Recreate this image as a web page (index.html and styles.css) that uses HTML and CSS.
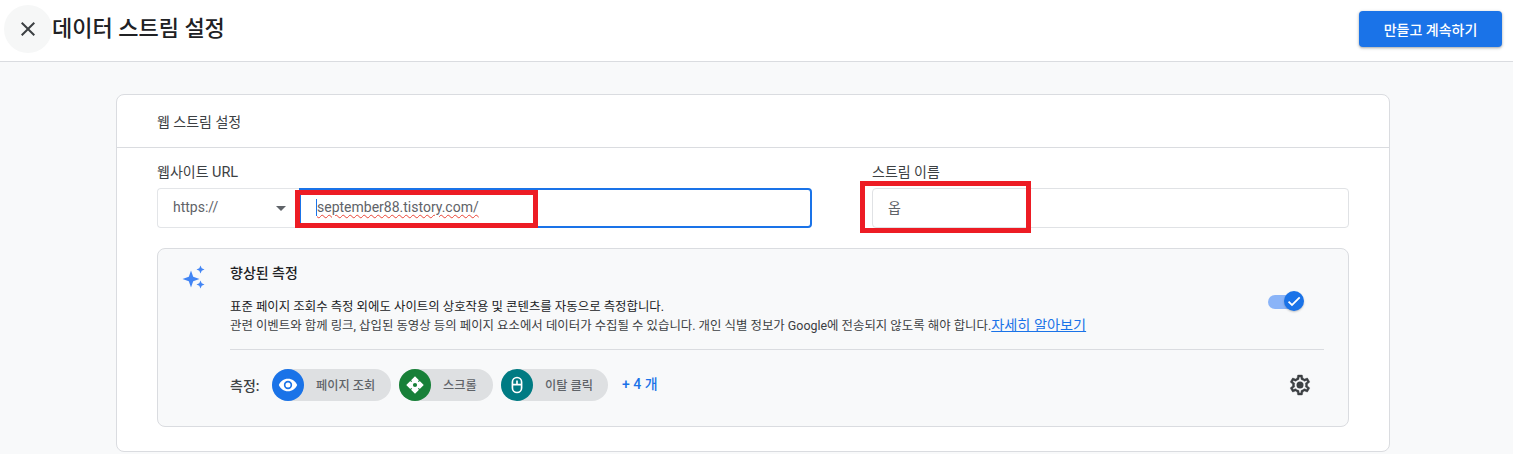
FILE: index.html
```html
<!DOCTYPE html>
<html lang="ko">
<head>
    <meta charset="UTF-8">
    <meta name="viewport" content="width=device-width, initial-scale=1.0">
    <title>데이터 스트림 설정</title>
    <link rel="stylesheet" href="styles.css">
</head>
<body>
    <header class="topbar">
        <div class="close-btn">
            <svg width="24" height="24" viewBox="0 0 24 24"><path d="M19 6.41 17.59 5 12 10.59 6.41 5 5 6.41 10.59 12 5 17.59 6.41 19 12 13.41 17.59 19 19 17.59 13.41 12z" fill="#3c4043"/></svg>
        </div>
        <h1 class="page-title">데이터 스트림 설정</h1>
        <button class="primary-btn">만들고 계속하기</button>
    </header>

    <main class="content">
        <section class="card">
            <div class="card-title">웹 스트림 설정</div>
            <div class="card-body">
                <div class="fields">
                    <div class="field-url">
                        <div class="field-label">웹사이트 <span class="label-latin">URL</span></div>
                        <div class="url-row">
                            <div class="protocol">
                                <span>https://</span>
                                <span class="arrow"></span>
                            </div>
                            <div class="url-input">
                                <span class="caret"></span><span class="url-text">september88.tistory.com/</span>
                                <div class="red-box box-url"></div>
                            </div>
                        </div>
                    </div>
                    <div class="field-name">
                        <div class="field-label">스트림 이름</div>
                        <div class="name-input">
                            옵
                            <div class="red-box box-name"></div>
                        </div>
                    </div>
                </div>

                <div class="panel">
                    <div class="panel-top">
                        <svg class="sparkle" width="24" height="24" viewBox="0 0 24 24" fill="#4285f4">
                            <path d="M9 5.5 11.2 11.8 17.5 14 11.2 16.2 9 22.5 6.8 16.2 0.5 14 6.8 11.8z"/>
                            <path d="M18.5 0.5 19.7 3.3 22.5 4.5 19.7 5.7 18.5 8.5 17.3 5.7 14.5 4.5 17.3 3.3z"/>
                            <path d="M18.5 15.5 19.7 18.3 22.5 19.5 19.7 20.7 18.5 23.5 17.3 20.7 14.5 19.5 17.3 18.3z"/>
                        </svg>
                        <div class="panel-text">
                            <div class="panel-title">향상된 측정</div>
                            <p class="panel-desc">표준 페이지 조회수 측정 외에도 사이트의 상호작용 및 콘텐츠를 자동으로 측정합니다.<br><span class="muted">관련 이벤트와 함께 링크, 삽입된 동영상 등의 페이지 요소에서 데이터가 수집될 수 있습니다. 개인 식별 정보가 Google에 전송되지 않도록 해야 합니다.</span><a class="learn-more" href="#">자세히 알아보기</a></p>
                        </div>
                        <div class="toggle">
                            <div class="toggle-track"></div>
                            <div class="toggle-knob">
                                <svg width="16" height="16" viewBox="0 0 24 24"><path d="M9 16.2 4.8 12l-1.9 1.9L9 20 21.5 7.5l-1.9-1.9z" fill="#fff"/></svg>
                            </div>
                        </div>
                    </div>
                    <div class="panel-bottom">
                        <span class="measure-label">측정:</span>
                        <div class="chip">
                            <span class="chip-icon blue">
                                <svg width="20" height="20" viewBox="0 0 24 24"><path fill-rule="evenodd" d="M12 4.5C7 4.5 2.7 7.6 1 12c1.7 4.4 6 7.5 11 7.5s9.3-3.1 11-7.5c-1.7-4.400-6-7.500-11-7.500zm0 12.500a5 5 0 1 1 0-10 5 5 0 0 1 0 10zm0-8a3 3 0 1 0 0 6 3 3 0 0 0 0-6z" fill="#fff"/></svg>
                            </span>
                            <span class="chip-label">페이지 조회</span>
                        </div>
                        <div class="chip chip-scroll">
                            <span class="chip-icon green">
                                <svg width="20" height="20" viewBox="0 0 24 24">
                                    <path fill-rule="evenodd" d="M12 1.5 22.5 12 12 22.5 1.500 12zM12 9.500a2.500 2.500 0 1 0 0 5 2.500 2.500 0 0 0 0-5z" fill="#fff"/>
                                    <path d="M8 8 5.500 5.500M16 8l2.500-2.500M8 16l-2.500 2.500M16 16l2.500 2.500" stroke="#188038" stroke-width="1.500"/>
                                </svg>
                            </span>
                            <span class="chip-label">스크롤</span>
                        </div>
                        <div class="chip chip-click">
                            <span class="chip-icon teal">
                                <svg width="20" height="20" viewBox="0 0 24 24" fill="none" stroke="#fff" stroke-width="2"><rect x="6.500" y="3" width="11" height="18" rx="5.500"/><path d="M12 6.500v4M6.500 11.500h11"/></svg>
                            </span>
                            <span class="chip-label">이탈 클릭</span>
                        </div>
                        <a class="more-link" href="#">+ 4 개</a>
                        <svg class="gear" width="24" height="24" viewBox="0 0 24 24"><path d="M19.43 12.98c.04-.32.07-.64.07-.98s-.03-.66-.07-.98l2.11-1.65c.19-.15.24-.42.12-.64l-2-3.46c-.12-.22-.39-.3-.61-.22l-2.49 1c-.52-.4-1.08-.73-1.69-.98l-.38-2.65A.488.488 0 0 0 14 2h-4c-.25 0-.46.18-.49.42l-.38 2.65c-.61.25-1.17.59-1.69.98l-2.49-1c-.23-.09-.49 0-.61.22l-2 3.46c-.13.22-.07.49.12.64l2.11 1.65c-.04.32-.07.65-.07.98s.03.66.07.98l-2.11 1.65c-.19.15-.24.42-.12.64l2 3.46c.12.22.39.3.61.22l2.49-1c.52.4 1.08.73 1.69.98l.38 2.65c.03.24.24.42.49.42h4c.25 0 .46-.18.49-.42l.38-2.65c.61-.25 1.17-.59 1.69-.98l2.49 1c.23.09.49 0 .61-.22l2-3.46c.12-.22.07-.49-.12-.64l-2.11-1.65zm-1.98-1.71c.04.31.05.52.05.73s-.02.43-.05.73l-.14 1.13.89.7 1.08.84-.7 1.21-1.27-.51-1.04-.42-.9.68c-.43.32-.84.56-1.25.73l-1.06.43-.16 1.13-.2 1.35h-1.4l-.19-1.35-.16-1.13-1.06-.43c-.43-.18-.83-.41-1.23-.71l-.91-.7-1.06.43-1.27.51-.7-1.21 1.08-.84.89-.7-.14-1.13c-.03-.31-.05-.54-.05-.74s.02-.43.05-.73l.14-1.13-.89-.7-1.08-.84.7-1.21 1.27.51 1.04.42.9-.68c.43-.32.84-.56 1.25-.73l1.06-.43.16-1.13.2-1.35h1.39l.19 1.35.16 1.13 1.06.43c.43.18.83.41 1.23.71l.91.7 1.06-.43 1.27-.51.7 1.21-1.07.85-.89.7.14 1.13z" fill="#3c4043" stroke="#3c4043" stroke-width="0.4"/><circle cx="12" cy="12" r="3.500" fill="#3c4043"/></svg>
                    </div>
                </div>
            </div>
        </section>
    </main>
</body>
</html>
```

FILE: styles.css
```css
* {
    box-sizing: border-box;
}

html, body {
    height: 100%;
}

body {
    margin: 0;
    overflow: hidden;
    background-color: #f8f9fa;
    color: #3c4043;
    font-family: Roboto, "Noto Sans CJK KR", sans-serif;
}

.topbar {
    display: flex;
    align-items: center;
    height: 62px;
    padding: 0 11px 4px 4px;
    background-color: #fff;
    border-bottom: 1px solid #dadce0;
}

.close-btn {
    display: flex;
    align-items: center;
    justify-content: center;
    flex: none;
    width: 48px;
    height: 48px;
    margin-top: 1px;
    border-radius: 50%;
    background-color: #f6f7f7;
}

.page-title {
    margin: 0 0 5px 0;
    font-size: 22px;
    font-weight: 500;
    color: #202124;
}

.primary-btn {
    width: 143px;
    height: 36px;
    margin: 1px 0 0 auto;
    border: none;
    border-radius: 4px;
    background-color: #1a73e8;
    color: #fff;
    font-family: inherit;
    font-size: 14px;
    font-weight: 500;
    box-shadow: 0 1px 2px rgba(60,64,67,0.3), 0 1px 3px 1px rgba(60,64,67,0.15);
}

.content {
    padding: 32px 123px 0 116px;
}

.card {
    height: 358px;
    background-color: #fff;
    border: 1px solid #dadce0;
    border-radius: 8px;
}

.card-title {
    height: 53px;
    padding: 17px 40px 0;
    border-bottom: 1px solid #dadce0;
    font-size: 14px;
    line-height: 20px;
}

.card-body {
    padding: 15px 40px 0;
}

.fields {
    display: flex;
    height: 65px;
}

.field-url {
    width: 655px;
    margin-right: 60px;
}

.field-name {
    width: 477px;
}

.field-label {
    height: 25px;
    font-size: 14px;
    line-height: 19px;
}

.label-latin {
    font-size: 14.5px;
}

.url-row {
    display: flex;
}

.protocol {
    display: flex;
    align-items: center;
    justify-content: space-between;
    width: 142px;
    height: 40px;
    padding: 0 13px 2px 15px;
    border: 1px solid #e3e5e8;
    border-right: none;
    border-radius: 4px 0 0 4px;
    background-color: #fff;
    color: #5f6368;
    font-size: 14px;
}

.arrow {
    width: 0;
    height: 0;
    margin-top: 2px;
    border-left: 5px solid transparent;
    border-right: 5px solid transparent;
    border-top: 5px solid #5f6368;
}

.url-input {
    position: relative;
    display: flex;
    align-items: center;
    width: 513px;
    height: 40px;
    padding: 0 0 2px 15px;
    border: 2px solid #1a73e8;
    border-radius: 0 4px 4px 0;
    color: #5f6368;
    font-size: 14px;
}

.caret {
    width: 1px;
    height: 17px;
    background-color: #1a73e8;
}

.url-text {
    text-decoration: underline wavy #ea4335 1px;
    text-underline-offset: 2px;
}

.name-input {
    position: relative;
    display: flex;
    align-items: center;
    height: 40px;
    padding: 0 0 2px 15px;
    border: 1px solid #e0e2e5;
    border-radius: 4px;
    color: #5f6368;
    font-size: 14px;
}

/* annotation boxes drawn over the screenshot */
.red-box {
    position: absolute;
    border: 5px solid #ed1c24;
}

.box-url {
    left: -6px;
    top: 0;
    width: 243px;
    height: 38px;
}

.box-name {
    left: -13px;
    top: -8px;
    width: 171px;
    height: 52px;
}

.panel {
    height: 179px;
    margin-top: 20px;
    background-color: #f8f9fa;
    border: 1px solid #dadce0;
    border-radius: 8px;
}

.panel-top {
    display: flex;
    height: 100px;
    padding: 14px 24px 0;
}

.sparkle {
    flex: none;
    margin: 2px 0 0 0;
}

.panel-text {
    flex: 1;
    margin-left: 24px;
}

.panel-title {
    font-size: 14px;
    font-weight: 500;
    line-height: 20px;
    color: #202124;
}

.panel-desc {
    margin: 15px 0 0;
    font-size: 12.43px;
    line-height: 18px;
    color: #202124;
}

.muted {
    color: #3c4043;
}

.learn-more {
    color: #1a73e8;
    font-size: 14.2px;
    text-decoration: underline;
}

.toggle {
    position: relative;
    flex: none;
    width: 36px;
    height: 22px;
    margin: 28px 20px 0 0;
}

.toggle-track {
    width: 30px;
    height: 14px;
    margin-top: 4px;
    border-radius: 7px;
    background-color: #8ab4f8;
}

.toggle-knob {
    position: absolute;
    right: 0;
    top: 0;
    display: flex;
    align-items: center;
    justify-content: center;
    width: 20px;
    height: 20px;
    border-radius: 50%;
    background-color: #1a73e8;
    box-shadow: 0 1px 2px rgba(60,64,67,0.3);
}

.panel-bottom {
    display: flex;
    align-items: center;
    height: 77px;
    margin: 0 24px 0 72px;
    padding-bottom: 7px;
    border-top: 1px solid #dadce0;
}

.measure-label {
    width: 42px;
    font-size: 14px;
    font-weight: 500;
}

.chip {
    display: flex;
    align-items: center;
    width: 119px;
    height: 32px;
    margin-right: 8px;
    border-radius: 16px;
    background-color: #dee0e2;
    color: #5f6368;
    font-size: 12.2px;
    font-weight: 500;
}

.chip-scroll {
    width: 94px;
}

.chip-click {
    width: 107px;
}

.chip-icon {
    display: flex;
    align-items: center;
    justify-content: center;
    flex: none;
    width: 32px;
    height: 32px;
    margin-right: 12px;
    border-radius: 50%;
}

.blue {
    background-color: #1a73e8;
}

.green {
    background-color: #188038;
}

.teal {
    background-color: #007b83;
}

.more-link {
    margin: -3px 0 0 6px;
    color: #1a73e8;
    font-size: 14px;
    font-weight: 500;
    text-decoration: none;
}

.gear {
    margin: 0 12px 0 auto;
}
```
